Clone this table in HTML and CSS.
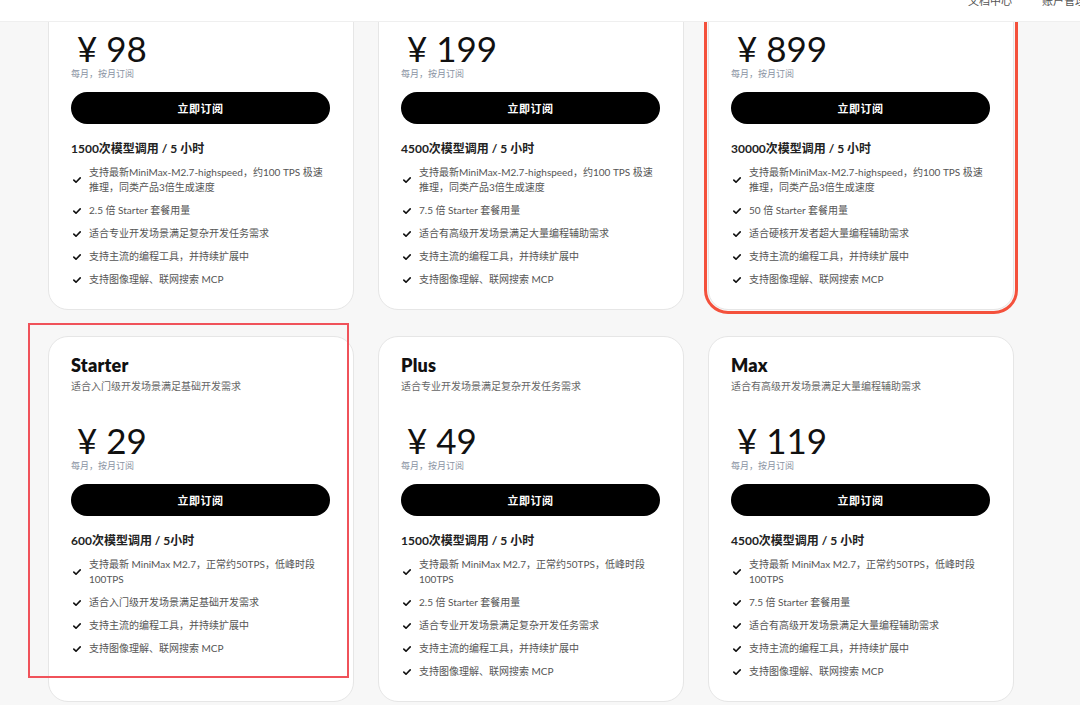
FILE: index.html
```html
<!DOCTYPE html>
<html lang="zh-CN">
<head>
<meta charset="utf-8">
<title>Coding Plan</title>
<link rel="stylesheet" href="styles.css">
</head>
<body>
<header class="topbar">
  <nav class="nav">
    <a class="nav-link">文档中心</a>
    <a class="nav-link">账户管理</a>
  </nav>
</header>

<main class="plans">
  <section class="grid">
    <article class="card">
      <h2 class="name">Plus-极速版</h2>
      <p class="desc">适合专业开发场景满足复杂开发任务需求</p>
      <div class="price">¥ 98</div>
      <p class="period">每月，按月订阅</p>
      <button class="btn">立即订阅</button>
      <p class="quota">1500次模型调用 / 5 小时</p>
      <ul class="features">
        <li><svg class="check" viewBox="0 0 8 6"><path d="M0.8 3.1 L3 5.2 L7.2 0.9"/></svg><span>支持最新MiniMax-M2.7-highspeed，约100 TPS 极速推理，同类产品3倍生成速度</span></li>
        <li><svg class="check" viewBox="0 0 8 6"><path d="M0.8 3.1 L3 5.2 L7.2 0.9"/></svg><span>2.5 倍 Starter 套餐用量</span></li>
        <li><svg class="check" viewBox="0 0 8 6"><path d="M0.8 3.1 L3 5.2 L7.2 0.9"/></svg><span>适合专业开发场景满足复杂开发任务需求</span></li>
        <li><svg class="check" viewBox="0 0 8 6"><path d="M0.8 3.1 L3 5.2 L7.2 0.9"/></svg><span>支持主流的编程工具，并持续扩展中</span></li>
        <li><svg class="check" viewBox="0 0 8 6"><path d="M0.8 3.1 L3 5.2 L7.2 0.9"/></svg><span>支持图像理解、联网搜索 MCP</span></li>
      </ul>
    </article>

    <article class="card">
      <h2 class="name">Max-极速版</h2>
      <p class="desc">适合有高级开发场景满足大量编程辅助需求</p>
      <div class="price">¥ 199</div>
      <p class="period">每月，按月订阅</p>
      <button class="btn">立即订阅</button>
      <p class="quota">4500次模型调用 / 5 小时</p>
      <ul class="features">
        <li><svg class="check" viewBox="0 0 8 6"><path d="M0.8 3.1 L3 5.2 L7.2 0.9"/></svg><span>支持最新MiniMax-M2.7-highspeed，约100 TPS 极速推理，同类产品3倍生成速度</span></li>
        <li><svg class="check" viewBox="0 0 8 6"><path d="M0.8 3.1 L3 5.2 L7.2 0.9"/></svg><span>7.5 倍 Starter 套餐用量</span></li>
        <li><svg class="check" viewBox="0 0 8 6"><path d="M0.8 3.1 L3 5.2 L7.2 0.9"/></svg><span>适合有高级开发场景满足大量编程辅助需求</span></li>
        <li><svg class="check" viewBox="0 0 8 6"><path d="M0.8 3.1 L3 5.2 L7.2 0.9"/></svg><span>支持主流的编程工具，并持续扩展中</span></li>
        <li><svg class="check" viewBox="0 0 8 6"><path d="M0.8 3.1 L3 5.2 L7.2 0.9"/></svg><span>支持图像理解、联网搜索 MCP</span></li>
      </ul>
    </article>

    <article class="card card-marked">
      <h2 class="name">Ultra-极速版</h2>
      <p class="desc">适合硬核开发者超大量编程辅助需求</p>
      <div class="price">¥ 899</div>
      <p class="period">每月，按月订阅</p>
      <button class="btn">立即订阅</button>
      <p class="quota">30000次模型调用 / 5 小时</p>
      <ul class="features">
        <li><svg class="check" viewBox="0 0 8 6"><path d="M0.8 3.1 L3 5.2 L7.2 0.9"/></svg><span>支持最新MiniMax-M2.7-highspeed，约100 TPS 极速推理，同类产品3倍生成速度</span></li>
        <li><svg class="check" viewBox="0 0 8 6"><path d="M0.8 3.1 L3 5.2 L7.2 0.9"/></svg><span>50 倍 Starter 套餐用量</span></li>
        <li><svg class="check" viewBox="0 0 8 6"><path d="M0.8 3.1 L3 5.2 L7.2 0.9"/></svg><span>适合硬核开发者超大量编程辅助需求</span></li>
        <li><svg class="check" viewBox="0 0 8 6"><path d="M0.8 3.1 L3 5.2 L7.2 0.9"/></svg><span>支持主流的编程工具，并持续扩展中</span></li>
        <li><svg class="check" viewBox="0 0 8 6"><path d="M0.8 3.1 L3 5.2 L7.2 0.9"/></svg><span>支持图像理解、联网搜索 MCP</span></li>
      </ul>
    </article>

    <article class="card">
      <div class="annotation"></div>
      <h2 class="name">Starter</h2>
      <p class="desc">适合入门级开发场景满足基础开发需求</p>
      <div class="price">¥ 29</div>
      <p class="period">每月，按月订阅</p>
      <button class="btn">立即订阅</button>
      <p class="quota">600次模型调用 / 5小时</p>
      <ul class="features">
        <li><svg class="check" viewBox="0 0 8 6"><path d="M0.8 3.1 L3 5.2 L7.2 0.9"/></svg><span>支持最新 MiniMax M2.7，正常约50TPS，低峰时段100TPS</span></li>
        <li><svg class="check" viewBox="0 0 8 6"><path d="M0.8 3.1 L3 5.2 L7.2 0.9"/></svg><span>适合入门级开发场景满足基础开发需求</span></li>
        <li><svg class="check" viewBox="0 0 8 6"><path d="M0.8 3.1 L3 5.2 L7.2 0.9"/></svg><span>支持主流的编程工具，并持续扩展中</span></li>
        <li><svg class="check" viewBox="0 0 8 6"><path d="M0.8 3.1 L3 5.2 L7.2 0.9"/></svg><span>支持图像理解、联网搜索 MCP</span></li>
      </ul>
    </article>

    <article class="card">
      <h2 class="name">Plus</h2>
      <p class="desc">适合专业开发场景满足复杂开发任务需求</p>
      <div class="price">¥ 49</div>
      <p class="period">每月，按月订阅</p>
      <button class="btn">立即订阅</button>
      <p class="quota">1500次模型调用 / 5 小时</p>
      <ul class="features">
        <li><svg class="check" viewBox="0 0 8 6"><path d="M0.8 3.1 L3 5.2 L7.2 0.9"/></svg><span>支持最新 MiniMax M2.7，正常约50TPS，低峰时段100TPS</span></li>
        <li><svg class="check" viewBox="0 0 8 6"><path d="M0.8 3.1 L3 5.2 L7.2 0.9"/></svg><span>2.5 倍 Starter 套餐用量</span></li>
        <li><svg class="check" viewBox="0 0 8 6"><path d="M0.8 3.1 L3 5.2 L7.2 0.9"/></svg><span>适合专业开发场景满足复杂开发任务需求</span></li>
        <li><svg class="check" viewBox="0 0 8 6"><path d="M0.8 3.1 L3 5.2 L7.2 0.9"/></svg><span>支持主流的编程工具，并持续扩展中</span></li>
        <li><svg class="check" viewBox="0 0 8 6"><path d="M0.8 3.1 L3 5.2 L7.2 0.9"/></svg><span>支持图像理解、联网搜索 MCP</span></li>
      </ul>
    </article>

    <article class="card">
      <h2 class="name">Max</h2>
      <p class="desc">适合有高级开发场景满足大量编程辅助需求</p>
      <div class="price">¥ 119</div>
      <p class="period">每月，按月订阅</p>
      <button class="btn">立即订阅</button>
      <p class="quota">4500次模型调用 / 5 小时</p>
      <ul class="features">
        <li><svg class="check" viewBox="0 0 8 6"><path d="M0.8 3.1 L3 5.2 L7.2 0.9"/></svg><span>支持最新 MiniMax M2.7，正常约50TPS，低峰时段100TPS</span></li>
        <li><svg class="check" viewBox="0 0 8 6"><path d="M0.8 3.1 L3 5.2 L7.2 0.9"/></svg><span>7.5 倍 Starter 套餐用量</span></li>
        <li><svg class="check" viewBox="0 0 8 6"><path d="M0.8 3.1 L3 5.2 L7.2 0.9"/></svg><span>适合有高级开发场景满足大量编程辅助需求</span></li>
        <li><svg class="check" viewBox="0 0 8 6"><path d="M0.8 3.1 L3 5.2 L7.2 0.9"/></svg><span>支持主流的编程工具，并持续扩展中</span></li>
        <li><svg class="check" viewBox="0 0 8 6"><path d="M0.8 3.1 L3 5.2 L7.2 0.9"/></svg><span>支持图像理解、联网搜索 MCP</span></li>
      </ul>
    </article>
  </section>
</main>
</body>
</html>
```

FILE: styles.css
```css
* { box-sizing: border-box; }

html, body {
  margin: 0;
  padding: 0;
}

body {
  background: #f7f7f7;
  font-family: "Lato", "Noto Sans CJK SC", sans-serif;
  color: #222;
  overflow: hidden;
  height: 705px;
}

.topbar {
  position: fixed;
  top: 0;
  left: 0;
  right: 0;
  height: 22px;
  background: #fff;
  border-bottom: 1px solid #efefef;
  overflow: hidden;
  z-index: 10;
}

.nav {
  display: flex;
  gap: 30px;
  padding-left: 968px;
  margin-top: -6px;
  white-space: nowrap;
}

.nav-link {
  font-size: 11px;
  line-height: 14px;
  color: #555;
}

.plans {
  margin-top: -56px;
  padding-left: 48px;
}

.grid {
  display: grid;
  grid-template-columns: repeat(3, 306px);
  column-gap: 24px;
  row-gap: 26px;
}

.card {
  position: relative;
  background: #fff;
  border: 1px solid #e6e6e6;
  border-radius: 20px;
  padding: 17px 23px 22px 22px;
  display: flex;
  flex-direction: column;
}

.card-marked {
  outline: 3px solid #f4513c;
  outline-offset: 1px;
}

.annotation {
  position: absolute;
  left: -21px;
  top: -14px;
  width: 321px;
  height: 355px;
  border: 2px solid #f0525a;
  pointer-events: none;
}

.name {
  margin: 0;
  font-size: 18px;
  line-height: 22px;
  font-weight: 800;
  color: #111;
  letter-spacing: 0.2px;
}

.desc {
  margin: 3px 0 0;
  font-size: 10px;
  line-height: 14px;
  color: #666;
}

.price {
  margin-top: 27px;
  font-size: 35px;
  line-height: 40px;
  font-weight: 400;
  color: #111;
  padding-left: 6px;
}

.period {
  margin: 0;
  font-size: 9px;
  line-height: 12px;
  color: #8a93a3;
}

.btn {
  margin-top: 12px;
  height: 32px;
  width: 100%;
  border: none;
  border-radius: 16px;
  background: #000;
  color: #fff;
  font-family: "Lato", "Noto Sans CJK SC", sans-serif;
  font-size: 11px;
  font-weight: 700;
  letter-spacing: 0.5px;
}

.quota {
  margin: 17px 0 0;
  font-size: 12px;
  line-height: 16px;
  font-weight: 700;
  color: #222;
}

.features {
  list-style: none;
  margin: 8px 0 0;
  padding: 0;
  display: flex;
  flex-direction: column;
  gap: 8px;
}

.features li {
  display: flex;
  align-items: center;
  gap: 8px;
  font-size: 10px;
  line-height: 15px;
  color: #555;
  padding-left: 2px;
}

.check {
  flex: none;
  width: 8px;
  height: 6px;
  fill: none;
  stroke: #111;
  stroke-width: 1.6;
  stroke-linecap: round;
  stroke-linejoin: round;
}
```
